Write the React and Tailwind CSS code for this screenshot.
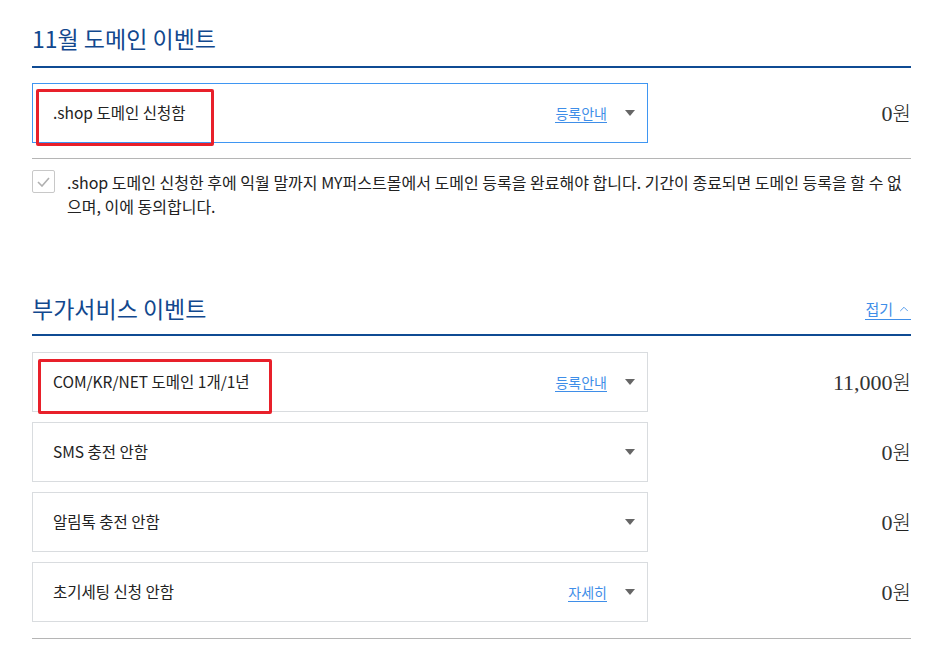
import { ChevronUp } from 'lucide-react'

const FONT = { fontFamily: '"Noto Sans CJK KR", "Noto Sans", sans-serif' }
const NUM = { fontFamily: '"Liberation Serif", "Noto Sans CJK KR", serif' }

const ADDONS = [
  { label: 'COM/KR/NET 도메인 1개/1년', link: '등록안내', price: '11,000원', mark: 'left-[5px] top-[6px] w-[234px] h-[55px]' },
  { label: 'SMS 충전 안함', price: '0원' },
  { label: '알림톡 충전 안함', price: '0원' },
  { label: '초기세팅 신청 안함', link: '자세히', price: '0원' },
]

function Caret() {
  return (
    <svg width="10" height="6" viewBox="0 0 10 6" className="ml-[18px] mr-[12px]">
      <path d="M0 0h10L5 6z" fill="#666" />
    </svg>
  )
}

function SelectRow({ label, link, price, active, mark }) {
  return (
    <div className="flex items-center">
      <div className={`relative w-[616px] h-[60px] flex items-center pl-[20px] border bg-white ${active ? 'border-[#3f96f2]' : 'border-[#d9dcdf]'}`}>
        <span className="flex-1 text-[15.5px] text-[#222]">{label}</span>
        {link && (
          <span className="text-[14px] text-[#3f8ee8] border-b border-[#3f8ee8] leading-[18px]">{link}</span>
        )}
        <Caret />
        {mark && (
          <div className={`absolute border-[3px] border-[#e8202a] rounded-[2px] ${mark}`} />
        )}
      </div>
      <div className="flex-1 text-right text-[22px] text-[#333]" style={NUM}>
        {price.slice(0, -1)}
        <span className="text-[20px] font-light text-[#222]" style={FONT}>원</span>
      </div>
    </div>
  )
}

export default function App() {
  return (
    <div className="bg-white min-h-[649px] w-[947px]" style={FONT}>
      <div className="ml-[32px] w-[879px]">
        {/* 11월 도메인 이벤트 */}
        <div className="pt-[22px] pb-[12px] border-b-2 border-[#0f4b93]">
          <h2 className="text-[23px] leading-[32px] text-[#12488e] font-normal">11월 도메인 이벤트</h2>
        </div>
        <div className="mt-[15px]">
          <SelectRow label=".shop 도메인 신청함" link="등록안내" price="0원" active mark="left-[3px] top-[5px] w-[178px] h-[57px]" />
        </div>
        <div className="mt-[15px] border-t border-[#b5b5b5] pt-[11px] flex gap-[12px]">
          <span className="w-[23px] h-[23px] shrink-0 border border-[#c8c8c8] rounded-[2px] flex items-center justify-center">
            <svg width="13" height="10" viewBox="0 0 13 10">
              <path d="M1 5l4 4 7-8" fill="none" stroke="#b0b0b0" strokeWidth="1.6" />
            </svg>
          </span>
          <p className="text-[16px] leading-[24px] text-[#222] pr-[4px]">
            .shop 도메인 신청한 후에 익월 말까지 MY퍼스트몰에서 도메인 등록을 완료해야 합니다. 기간이 종료되면 도메인 등록을 할 수 없으며, 이에 동의합니다.
          </p>
        </div>

        {/* 부가서비스 이벤트 */}
        <div className="mt-[74px] pb-[10px] border-b-2 border-[#0f4b93] flex items-end justify-between">
          <h2 className="text-[23px] leading-[32px] text-[#12488e] font-normal">부가서비스 이벤트</h2>
          <span className="mb-[4px] flex items-center gap-[4px] text-[15px] text-[#3f8ee8] border-b border-[#3f8ee8] leading-[20px]">
            접기 <ChevronUp size={14} strokeWidth={1.5} />
          </span>
        </div>
        <div className="mt-[16px] flex flex-col gap-[10px]">
          {ADDONS.map((a) => (
            <SelectRow key={a.label} {...a} />
          ))}
        </div>
        <div className="mt-[16px] border-t border-[#b5b5b5]" />
      </div>
    </div>
  )
}
